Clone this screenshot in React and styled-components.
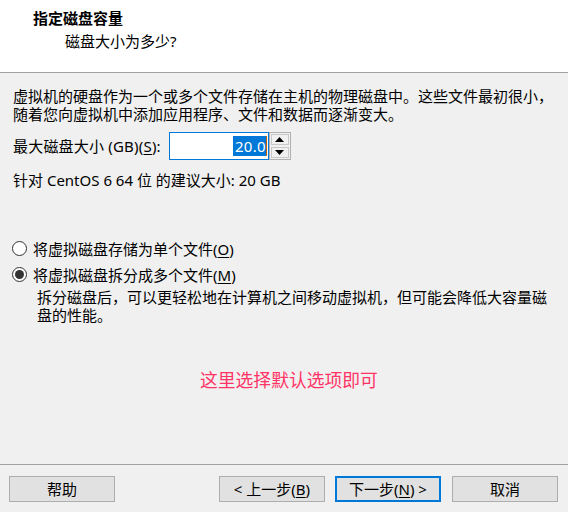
import React from "react";
import styled, { createGlobalStyle } from "styled-components";

const Global = createGlobalStyle`
  html, body { margin: 0; padding: 0; background: #f0f0f0; }
  body {
    font-family: "Segoe UI", "Noto Sans", "Noto Sans CJK SC", sans-serif;
    font-size: 15px;
    color: #000;
  }
`;

const Window = styled.div`
  width: 568px;
  height: 512px;
  display: flex;
  flex-direction: column;
  background: #f0f0f0;
  overflow: hidden;
`;

const Header = styled.header`
  background: #fff;
  border-bottom: 1px solid #a0a0a0;
  padding: 8px 0 0 33px;
  box-sizing: border-box;
  height: 73px;
`;

const Title = styled.div`
  font-weight: 700;
  line-height: 20px;
  font-family: "Noto Sans CJK SC", sans-serif;
`;

const Subtitle = styled.div`
  line-height: 20px;
  margin-top: 3px;
  padding-left: 32px;
`;

const Body = styled.main`
  flex: 1;
  padding: 14px 0 0 13px;
  display: flex;
  flex-direction: column;
`;

const Para = styled.p`
  margin: 0;
  line-height: 18px;
  width: 545px;
`;

const SizeRow = styled.div`
  display: flex;
  align-items: center;
  height: 29px;
  margin-top: 8px;
`;

const Label = styled.span`
  margin-right: 8px;
  line-height: 18px;
  letter-spacing: 0.2px;
`;

const U = styled.span`
  text-decoration: underline;
  text-underline-offset: 2px;
`;

const NumberBox = styled.div`
  width: 100px;
  height: 28px;
  box-sizing: border-box;
  border: 1px solid #0078d7;
  background: #fff;
  display: flex;
  align-items: center;
  justify-content: flex-end;
  padding-right: 1px;
`;

const Selected = styled.span`
  background: #0078d7;
  color: #fff;
  line-height: 20px;
  padding: 0 0 0 2px;
  letter-spacing: 0.3px;
`;

const Caret = styled.span`
  width: 1px;
  height: 20px;
  background: #c06000;
`;

const Spinner = styled.div`
  width: 22px;
  height: 28px;
  box-sizing: border-box;
  border: 1px solid #b0b0b0;
  display: flex;
  flex-direction: column;
  background: #f0f0f0;
`;

const SpinBtn = styled.div`
  flex: 1;
  display: flex;
  align-items: center;
  justify-content: center;
  border: 1px solid #c8c8c8;
  margin: 1px;
  background: #f0f0f0;
`;

const Rec = styled.div`
  line-height: 18px;
  margin-top: 11px;
`;

const Options = styled.div`
  margin-top: 46px;
  display: flex;
  flex-direction: column;
`;

const RadioRow = styled.div`
  display: flex;
  align-items: center;
  height: 26px;
`;

const Circle = styled.span`
  width: 15px;
  height: 15px;
  box-sizing: border-box;
  border-radius: 50%;
  border: 1px solid #333;
  background: #fff;
  display: flex;
  align-items: center;
  justify-content: center;
  margin-left: -1px;
  margin-right: 6px;
  &::after {
    content: "";
    width: 9px;
    height: 9px;
    border-radius: 50%;
    background: ${(p) => (p.$checked ? "#333" : "transparent")};
  }
`;

const Desc = styled.p`
  margin: 1px 0 0 24px;
  line-height: 18px;
  width: 515px;
`;

const Note = styled.div`
  margin-top: 44px;
  padding-left: 187px;
  color: #ff3366;
  font-size: 17.8px;
  line-height: 22px;
  font-family: "Noto Sans CJK SC", sans-serif;
`;

const Footer = styled.footer`
  height: 48px;
  box-sizing: border-box;
  border-top: 1px solid #a0a0a0;
  padding: 11px 10px 0 9px;
  display: flex;
  align-items: flex-start;
`;

const Spacer = styled.div`
  flex: 1;
`;

const Button = styled.div`
  width: 106px;
  height: 26px;
  box-sizing: border-box;
  border: ${(p) => (p.$default ? "2px solid #0078d7" : "1px solid #adadad")};
  background: #e1e1e1;
  display: flex;
  align-items: center;
  justify-content: center;
  line-height: 18px;
  margin-left: ${(p) => p.$ml || 0}px;
`;

const Up = () => (
  <svg width="9" height="5" viewBox="0 0 9 5">
    <path d="M4.5 0 L9 5 L0 5 Z" fill="#000" />
  </svg>
);
const Down = () => (
  <svg width="9" height="5" viewBox="0 0 9 5">
    <path d="M0 0 L9 0 L4.5 5 Z" fill="#000" />
  </svg>
);

export default function App() {
  return (
    <>
      <Global />
      <Window>
        <Header>
          <Title>指定磁盘容量</Title>
          <Subtitle>磁盘大小为多少?</Subtitle>
        </Header>
        <Body>
          <Para>
            虚拟机的硬盘作为一个或多个文件存储在主机的物理磁盘中。这些文件最初很小，随着您向虚拟机中添加应用程序、文件和数据而逐渐变大。
          </Para>
          <SizeRow>
            <Label>
              最大磁盘大小 (GB)(<U>S</U>):
            </Label>
            <NumberBox>
              <Selected>20.0</Selected>
              <Caret />
            </NumberBox>
            <Spinner>
              <SpinBtn>
                <Up />
              </SpinBtn>
              <SpinBtn>
                <Down />
              </SpinBtn>
            </Spinner>
          </SizeRow>
          <Rec>针对 CentOS 6 64 位 的建议大小: 20 GB</Rec>
          <Options>
            <RadioRow>
              <Circle />
              <span>
                将虚拟磁盘存储为单个文件(<U>O</U>)
              </span>
            </RadioRow>
            <RadioRow>
              <Circle $checked />
              <span>
                将虚拟磁盘拆分成多个文件(<U>M</U>)
              </span>
            </RadioRow>
            <Desc>
              拆分磁盘后，可以更轻松地在计算机之间移动虚拟机，但可能会降低大容量磁盘的性能。
            </Desc>
          </Options>
          <Note>这里选择默认选项即可</Note>
        </Body>
        <Footer>
          <Button>帮助</Button>
          <Spacer />
          <Button>
            &lt; 上一步(<U>B</U>)
          </Button>
          <Button $default $ml={10}>
            下一步(<U>N</U>) &gt;
          </Button>
          <Button $ml={11}>取消</Button>
        </Footer>
      </Window>
    </>
  );
}
